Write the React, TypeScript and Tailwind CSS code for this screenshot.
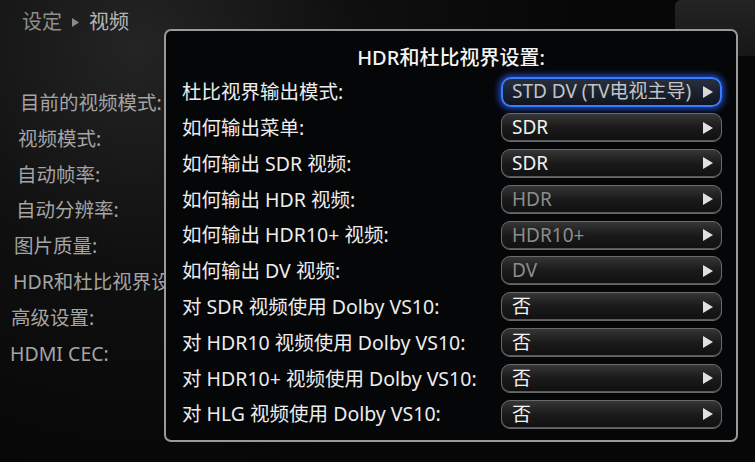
import React from "react";

const font = { fontFamily: '"Noto Sans", "Noto Sans CJK SC", sans-serif' };

function Arrow({ color = "#e6e6e6" }: { color?: string }) {
  return (
    <svg width="12" height="14" viewBox="0 0 12 14" className="shrink-0">
      <path d="M1 1 L11 7 L1 13 Z" fill={color} />
    </svg>
  );
}

type Row = { label: string; value: string; state: "focus" | "normal" | "disabled" };

const rows: Row[] = [
  { label: "杜比视界输出模式:", value: "STD DV (TV电视主导)", state: "focus" },
  { label: "如何输出菜单:", value: "SDR", state: "normal" },
  { label: "如何输出 SDR 视频:", value: "SDR", state: "normal" },
  { label: "如何输出 HDR 视频:", value: "HDR", state: "disabled" },
  { label: "如何输出 HDR10+ 视频:", value: "HDR10+", state: "disabled" },
  { label: "如何输出 DV 视频:", value: "DV", state: "disabled" },
  { label: "对 SDR 视频使用 Dolby VS10:", value: "否", state: "normal" },
  { label: "对 HDR10 视频使用 Dolby VS10:", value: "否", state: "normal" },
  { label: "对 HDR10+ 视频使用 Dolby VS10:", value: "否", state: "normal" },
  { label: "对 HLG 视频使用 Dolby VS10:", value: "否", state: "normal" },
];

const menu: { text: string; pl: string }[] = [
  { text: "目前的视频模式:", pl: "pl-[20px]" },
  { text: "视频模式:", pl: "pl-[18px]" },
  { text: "自动帧率:", pl: "pl-[17px]" },
  { text: "自动分辨率:", pl: "pl-[16px]" },
  { text: "图片质量:", pl: "pl-[14px]" },
  { text: "HDR和杜比视界设置:", pl: "pl-[13px]" },
  { text: "高级设置:", pl: "pl-[11px]" },
  { text: "HDMI CEC:", pl: "pl-[10px]" },
];

function ValueButton({ row }: { row: Row }) {
  if (row.state === "focus") {
    return (
      <div className="flex h-[30px] items-center justify-between rounded-[10px] border-2 border-[#3b7bff] bg-gradient-to-b from-[#28303e] to-[#0f1420] pl-[9px] pr-[6px] shadow-[0_0_6px_2px_rgba(40,100,255,0.75)]">
        <span className="text-[19px] leading-none text-[#c4c4c4] whitespace-nowrap">{row.value}</span>
        <Arrow color="#d8d8d8" />
      </div>
    );
  }
  const disabled = row.state === "disabled";
  return (
    <div className="flex h-[29px] items-center justify-between rounded-[9px] border border-[#6a6a6a] bg-gradient-to-b from-[#363636] via-[#1a1a1a] to-[#101010] pl-[10px] pr-[7px] shadow-[inset_0_-1px_0_#5a5a5a]">
      <span className={`text-[19px] leading-none ${disabled ? "text-[#8c8c8c]" : "text-[#f2f2f2]"}`}>{row.value}</span>
      <Arrow color="#e0e0e0" />
    </div>
  );
}

export default function App() {
  return (
    <div
      style={font}
      className="relative h-[462px] w-[755px] overflow-hidden bg-[radial-gradient(circle_at_18%_10%,#242424_0%,#0f0f0f_30%,#070707_60%)]"
    >
      {/* top right panel */}
      <div className="absolute right-0 top-0 h-[56px] w-[80px] rounded-bl-[4px] rounded-tl-[6px] bg-gradient-to-b from-[#242424] to-[#161616]" />

      {/* breadcrumb */}
      <div className="flex items-center gap-[9px] pl-[22px] pt-[9px] text-[20px] leading-[26px]">
        <span className="text-[#8e8e8e]">设定</span>
        <svg width="9" height="11" viewBox="0 0 9 11">
          <path d="M1 1 L8 5.5 L1 10 Z" fill="#8a8a8a" />
        </svg>
        <span className="text-[#b4b4b4]">视频</span>
      </div>

      {/* left menu */}
      <div className="mt-[50px] flex flex-col">
        {menu.map((m) => (
          <div key={m.text} className={`${m.pl} h-[35.8px] text-[19.5px] leading-[35.8px] whitespace-nowrap text-[#a4a4a4]`}>
            {m.text}
          </div>
        ))}
      </div>

      {/* dialog */}
      <div className="absolute left-[164px] top-[29px] h-[413px] w-[574px] rounded-[7px] border-2 border-[#9a9a9a] bg-[#050608]">
        <div className="pt-[14px] text-center text-[20px] font-medium leading-[26px] text-[#f4f4f4]">
          HDR和杜比视界设置:
        </div>
        <div className="mt-[3px] flex flex-col pl-[16px] pr-[14px]">
          {rows.map((r) => (
            <div key={r.label} className="grid h-[35.8px] grid-cols-[1fr_221px] items-center">
              <span className="text-[19.5px] leading-none whitespace-nowrap text-[#ededed]">{r.label}</span>
              <ValueButton row={r} />
            </div>
          ))}
        </div>
      </div>
    </div>
  );
}
